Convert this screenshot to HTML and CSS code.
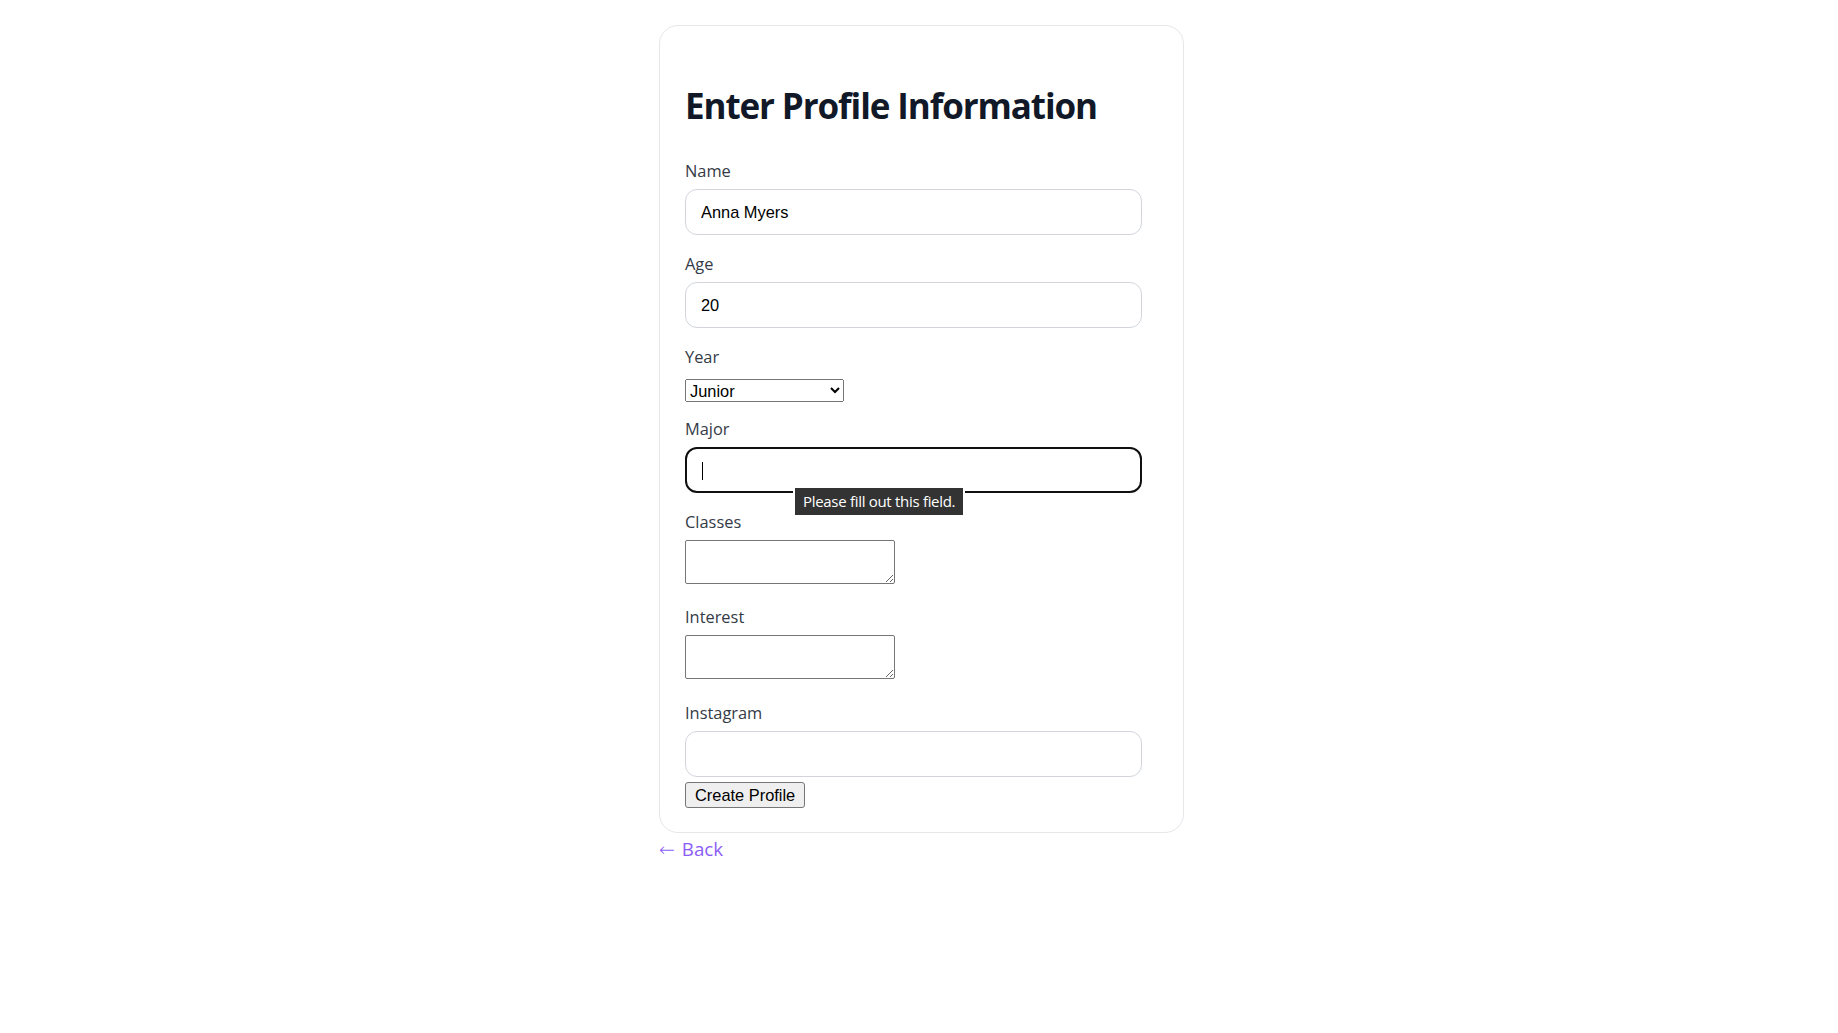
FILE: index.html
```html
<!DOCTYPE html>
<html lang="en">
<head>
<meta charset="utf-8">
<title>Enter Profile Information</title>
<link rel="stylesheet" href="styles.css">
</head>
<body>
<div class="page">
  <div class="card">
    <h1 class="title">Enter Profile Information</h1>
    <form class="form">
      <div class="field">
        <label class="label" for="name">Name</label>
        <input class="text-input" id="name" type="text" value="Anna Myers">
      </div>
      <div class="field">
        <label class="label" for="age">Age</label>
        <input class="text-input" id="age" type="text" value="20">
      </div>
      <div class="field">
        <label class="label" for="year">Year</label>
        <select class="year-select" id="year">
          <option>Freshman</option>
          <option>Sophomore</option>
          <option selected>Junior</option>
          <option>Senior</option>
        </select>
      </div>
      <div class="field">
        <label class="label" for="major">Major</label>
        <div class="focus-wrap">
          <input class="text-input focused" id="major" type="text">
          <span class="caret"></span>
          <div class="tooltip">Please fill out this field.</div>
        </div>
      </div>
      <div class="field">
        <label class="label" for="classes">Classes</label>
        <textarea class="area" id="classes"></textarea>
      </div>
      <div class="field">
        <label class="label" for="interest">Interest</label>
        <textarea class="area" id="interest"></textarea>
      </div>
      <div class="field field-last">
        <label class="label" for="instagram">Instagram</label>
        <input class="text-input" id="instagram" type="text">
        <button class="submit" type="button">Create Profile</button>
      </div>
    </form>
  </div>
  <a class="back" href="#"><span class="arrow">&larr;</span> Back</a>
</div>
</body>
</html>
```

FILE: styles.css
```css
html, body {
  margin: 0;
  padding: 0;
  background: #ffffff;
}

.page {
  width: 525px;
  margin-left: calc(50% - 260px);
  padding-top: 25px;
  font-family: "Open Sans", "Noto Sans", sans-serif;
}

.card {
  box-sizing: border-box;
  width: 525px;
  border: 1px solid #e5e7eb;
  border-radius: 19px;
  padding: 0 25px 24px 25px;
}

.title {
  margin: 59px 0 0 0;
  font-size: 35px;
  line-height: 42px;
  font-weight: 700;
  color: #111827;
  letter-spacing: -1.1px;
}

.form {
  margin-top: 32px;
  display: flex;
  flex-direction: column;
  gap: 17px;
}

.field {
  display: flex;
  flex-direction: column;
  align-items: flex-start;
}

.field-last {
  margin-top: 1px;
}

.label {
  display: block;
  font-size: 16.4px;
  line-height: 23px;
  margin-bottom: 7px;
  color: #343b47;
}

.text-input {
  display: block;
  box-sizing: border-box;
  width: 457px;
  height: 46px;
  margin: 0;
  border: 1px solid #d1d5db;
  border-radius: 12px;
  padding: 0 15px;
  font-family: "Liberation Sans", Arial, sans-serif;
  font-size: 16.4px;
  color: #000;
  background: #fff;
  outline: none;
}

.text-input.focused {
  border: 2px solid #101010;
  padding: 0 14px;
}

.focus-wrap {
  position: relative;
  width: 457px;
  height: 46px;
}

.caret {
  position: absolute;
  left: 17px;
  top: 15px;
  width: 1px;
  height: 18px;
  background: #000;
}

.tooltip {
  position: absolute;
  left: 108px;
  top: 39px;
  height: 27px;
  padding: 0 8px;
  border: 2px solid #ffffff;
  background: #333333;
  color: #ffffff;
  font-family: "Open Sans", "Noto Sans", sans-serif;
  font-size: 15px;
  letter-spacing: -0.3px;
  line-height: 27px;
  white-space: nowrap;
}

.year-select {
  box-sizing: border-box;
  width: 159px;
  height: 23px;
  margin: 4px 0 -2px 0;
  font-family: "Liberation Sans", Arial, sans-serif;
  font-size: 16.4px;
  color: #000;
}

.area {
  display: block;
  box-sizing: border-box;
  width: 210px;
  height: 44px;
  margin: 0 0 4px 0;
  border: 1px solid #767676;
  border-radius: 2px;
  font-family: "Liberation Mono", monospace;
  font-size: 13px;
}

.submit {
  margin-top: 5px;
  height: 26px;
  box-sizing: border-box;
  padding: 1px 9px;
  font-family: "Liberation Sans", Arial, sans-serif;
  font-size: 16.4px;
  color: #000;
  background: #efefef;
  border: 1px solid #767676;
  border-radius: 3px;
}

.back {
  display: inline-block;
  margin-top: 3px;
  font-size: 18.75px;
  line-height: 26px;
  color: #8b5cf6;
  text-decoration: none;
  word-spacing: 2px;
}

.arrow {
  font-family: "DejaVu Sans", sans-serif;
  font-size: 19px;
  font-weight: 300;
}
```
